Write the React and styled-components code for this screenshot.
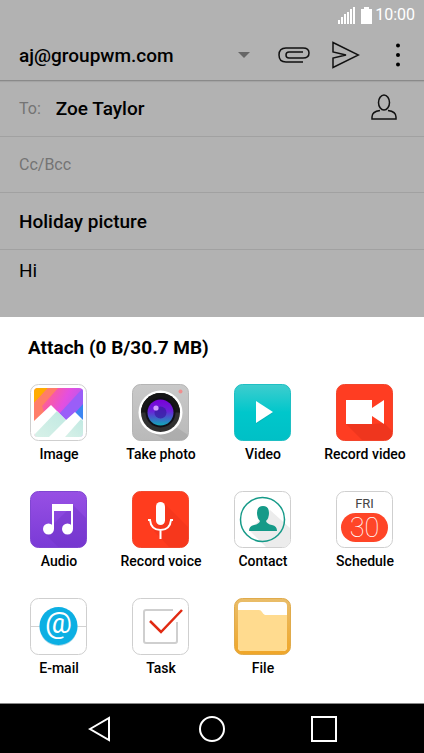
import React from 'react';
import styled, {createGlobalStyle} from "styled-components";

const GlobalStyle = createGlobalStyle`
    * {
        box-sizing: border-box;
    }
    body {
        margin: 0;
        font-family: Roboto, sans-serif;
        color: #000;
        background-color: #fff;
    }
    button, input, select, textarea {
        font-family: inherit;
        color: inherit;
        border: none;
        background-color: transparent;
        padding: 0;
        margin: 0;
        outline: none;
    }
    svg {
        display: block;
    }
`;

const Screen = styled.div`
    min-height: 100vh;
    display: flex;
    flex-direction: column;
`;

const Compose = styled.main`
    flex: 1;
    display: flex;
    flex-direction: column;
    background-color: #b2b2b2;
`;

const StatusBar = styled.div`
    height: 30px;
    padding: 0 9px;
    display: flex;
    align-items: center;
    justify-content: flex-end;
    gap: 3px;
    color: #fff;
    font-size: 16px;
    line-height: 20px;
`;

const Signal = styled.svg`
    margin-right: 3px;
`;

const Header = styled.header`
    height: 51px;
    padding-left: 19px;
    display: flex;
    align-items: center;
    border-bottom: 1px solid #8a8a8a;
    box-shadow: 0 1px 1px #a4a4a4;
`;

const Account = styled.div`
    position: relative;
    flex: 1;
    margin-right: 16px;
`;

const AccountSelect = styled.select`
    width: 100%;
    height: 32px;
    appearance: none;
    font-size: 19px;
    font-weight: 500;
`;

const AccountArrow = styled.svg`
    position: absolute;
    right: 2px;
    top: 13px;
    pointer-events: none;
`;

const IconButton = styled.button`
    width: 52px;
    height: 40px;
    display: flex;
    align-items: center;
    justify-content: center;
    cursor: pointer;
`;

const Row = styled.div`
    height: ${props => props.$tall ? "57px" : "56px"};
    padding: 0 14px 0 19px;
    display: flex;
    align-items: center;
    border-bottom: 1px solid #a1a1a1;
`;

const RowLabel = styled.label`
    margin-right: 15px;
    font-size: 16px;
    color: #747474;
`;

const Field = styled.input`
    flex: 1;
    min-width: 0;
    height: 32px;
    font-size: ${props => props.$small ? "16px" : "19px"};
    font-weight: ${props => props.$small ? 400 : 500};

    &::placeholder {
        color: #747474;
        opacity: 1;
    }
`;

const Body = styled.textarea`
    flex: 1;
    min-height: 40px;
    padding: 10px 19px;
    resize: none;
    font-size: 19px;
    line-height: 22px;
`;

const Sheet = styled.section`
    padding: 19px 8px 25px;
    background-color: #fff;
`;

const Title = styled.h2`
    margin: 0 20px 24px;
    font-size: 19px;
    line-height: 24px;
    font-weight: 700;
`;

const Grid = styled.div`
    display: grid;
    grid-template-columns: repeat(4, 1fr);
    row-gap: 27px;
`;

const Item = styled.button`
    display: flex;
    flex-direction: column;
    align-items: center;
    gap: 3px;
    font-size: 14px;
    line-height: 20px;
    font-weight: 500;
    white-space: nowrap;
    cursor: pointer;
`;

const NavBar = styled.nav`
    height: 50px;
    padding: 0 44px;
    display: grid;
    grid-template-columns: repeat(3, 1fr);
    background-color: #000;
    border-top: 1px solid #888;
`;

const NavButton = styled.button`
    display: flex;
    align-items: center;
    justify-content: center;
    cursor: pointer;
`;

const IconText = styled.text`
    font-family: Roboto, sans-serif;
    font-size: ${props => props.$size}px;
    font-weight: ${props => props.$weight || 400};
    text-anchor: middle;
`;

// rounded tile shared by every attach icon
const Tile = ({fill, stroke, children}) => (
    <svg width="58" height="57" viewBox="0 0 58 57" aria-hidden="true">
        <rect x="0.5" y="0.5" width="56" height="56" rx="8" fill={fill} stroke={stroke}/>
        {children}
    </svg>
);

const ImageIcon = () => (
    <Tile fill="#fff" stroke="#cfcfcf">
        <defs>
            <linearGradient id="sky" x1="0" y1="0" x2="1" y2="0.5">
                <stop offset="0" stopColor="#ff8a5c"/>
                <stop offset="0.35" stopColor="#f95aa5"/>
                <stop offset="0.6" stopColor="#e44fe0"/>
                <stop offset="1" stopColor="#a45cf5"/>
            </linearGradient>
            <linearGradient id="snow" x1="1" y1="0" x2="0" y2="1">
                <stop offset="0" stopColor="#c0e9e2"/>
                <stop offset="1" stopColor="#d8f1e8"/>
            </linearGradient>
            <clipPath id="photo"><rect x="4" y="4" width="49" height="49" rx="4"/></clipPath>
        </defs>
        <g clipPath="url(#photo)">
            <rect x="4" y="4" width="49" height="49" fill="url(#sky)"/>
            <path d="M4 4h14L4 19z" fill="#ffab00"/>
            <path d="M28 4h-10L4 19v19l10-10-2-6z" fill="#ff7d68"/>
            <path d="M53 4v20L40 37h-4l-7-7z" fill="#9a5ef8"/>
            <path d="M53 20v18l-8-9z" fill="#3c86f2"/>
            <path d="M4 37l17-16 15 15 9-8 8 8v17H4z" fill="#fff"/>
            <path d="M27 27l9 9-17 17H4v-2z" fill="url(#snow)"/>
            <path d="M51 35l3 3v15H35z" fill="url(#snow)"/>
        </g>
    </Tile>
);

const CameraIcon = () => (
    <Tile fill="url(#metal)" stroke="#b5b5b5">
        <defs>
            <linearGradient id="metal" x1="0" y1="0" x2="0" y2="1">
                <stop offset="0" stopColor="#c9c9c9"/>
                <stop offset="1" stopColor="#b9b9b9"/>
            </linearGradient>
            <linearGradient id="lens" x1="0" y1="0" x2="0" y2="1">
                <stop offset="0" stopColor="#7a00d8"/>
                <stop offset="0.45" stopColor="#6a22d8"/>
                <stop offset="1" stopColor="#10aab8"/>
            </linearGradient>
        </defs>
        <path d="M44 43l12 8q-1 5-7 5H33L17 47z" fill="#9f9f9f" opacity="0.5"/>
        <circle cx="28.5" cy="28.5" r="22" fill="#fff"/>
        <circle cx="28.5" cy="28.5" r="19.5" fill="#303030"/>
        <path d="M9 28.5a19.5 19.5 0 0 1 39 0z" fill="#161616"/>
        <circle cx="28.5" cy="28.5" r="15" fill="#101018"/>
        <circle cx="28.5" cy="28.5" r="13" fill="url(#lens)"/>
        <circle cx="28.5" cy="28.5" r="6" fill="#3b1ea6" opacity="0.8"/>
        <circle cx="24" cy="24" r="2.6" fill="#cf9cff"/>
        <circle cx="48.5" cy="7.5" r="2" fill="#f08e8e"/>
    </Tile>
);

const VideoIcon = () => (
    <Tile fill="url(#teal)" stroke="#1fbfc3">
        <defs>
            <linearGradient id="teal" x1="0" y1="0" x2="0" y2="1">
                <stop offset="0" stopColor="#3fcdce"/>
                <stop offset="0.5" stopColor="#00c7cb"/>
                <stop offset="1" stopColor="#00c0c6"/>
            </linearGradient>
        </defs>
        <path d="M22 18l17 11-17 11z" fill="#089ea4" opacity="0.5"/>
        <path d="M22 17l17 11-17 11z" fill="#fff"/>
    </Tile>
);

const RecordVideoIcon = () => (
    <Tile fill="#ff3d22" stroke="#f2452c">
        <path d="M10 40L38 40 48 39 56 47v2q0 7-7 7H26z" fill="#e0301a" opacity="0.5"/>
        <path d="M10 16h26v8l12-8v24l-12-8v8H10z" fill="#fff"/>
    </Tile>
);

const AudioIcon = () => (
    <Tile fill="url(#violet)" stroke="#8046d2">
        <defs>
            <linearGradient id="violet" x1="0" y1="0" x2="0" y2="1">
                <stop offset="0" stopColor="#9750e4"/>
                <stop offset="1" stopColor="#7a3ad6"/>
            </linearGradient>
        </defs>
        <path d="M43 14l13 13v22q0 7-7 7H28L14 42z" fill="#6a2fc0" opacity="0.3"/>
        <path d="M22 13h21v25h-2V20H24v18h-2z" fill="#fff"/>
        <circle cx="18.5" cy="38" r="5.5" fill="#fff"/>
        <circle cx="37.5" cy="38" r="5.5" fill="#fff"/>
    </Tile>
);

const RecordVoiceIcon = () => (
    <Tile fill="#ff3c1e" stroke="#f2482e">
        <path d="M33 13l23 23v13q0 7-7 7H37L22 40z" fill="#e8301a" opacity="0.4"/>
        <rect x="24" y="11" width="9" height="23" rx="4.5" fill="#fff"/>
        <path d="M16 29h2q1 10 10.500 10T39 29h2M28.500 39v9" fill="none" stroke="#fff" strokeWidth="2"/>
    </Tile>
);

const ContactIcon = () => (
    <Tile fill="#fff" stroke="#cfcfcf">
        <path d="M36 19l20 18v12q0 7-7 7H32L15 39z" fill="#ececec"/>
        <circle cx="28.5" cy="28.5" r="22" fill="none" stroke="#159a88" strokeWidth="1.5"/>
        <path d="M15 40q0-5 5-6 5-1 6-4-3-3-3-8 0-7 6-7t6 7q0 5-3 8 1 3 6 4 5 1 5 6z" fill="#159a88"/>
    </Tile>
);

const ScheduleIcon = () => (
    <Tile fill="#fff" stroke="#cfcfcf">
        <IconText x="28.5" y="17" $size={13} fill="#444">FRI</IconText>
        <rect x="5" y="22" width="47" height="29" rx="14.5" fill="#ff4527"/>
        <IconText x="28.5" y="46" $size={27} $weight={100} fill="#fff">30</IconText>
    </Tile>
);

const EmailIcon = () => (
    <Tile fill="#fff" stroke="#cfcfcf">
        <path d="M1 28.5h55" stroke="#d2d2d2"/>
        <circle cx="28.5" cy="29" r="19" fill="#a9d9ea"/>
        <circle cx="28.5" cy="28" r="19" fill="#0cafe3"/>
        <IconText x="28.5" y="35" $size={30} fill="#fff">@</IconText>
    </Tile>
);

const TaskIcon = () => (
    <Tile fill="#fff" stroke="#cfcfcf">
        <path d="M41 12H14q-2 0-2 2v29q0 2 2 2h29q2 0 2-2V24" fill="none" stroke="#cfcfcf" strokeWidth="2"/>
        <path d="M18 23l11 11 21-22" fill="none" stroke="#e12a12" strokeWidth="2.5"/>
    </Tile>
);

const FileIcon = () => (
    <Tile fill="url(#amber)" stroke="#e0ab4c">
        <defs>
            <linearGradient id="amber" x1="0" y1="0" x2="0" y2="1">
                <stop offset="0" stopColor="#e9bd6a"/>
                <stop offset="1" stopColor="#f0a628"/>
            </linearGradient>
        </defs>
        <rect x="4" y="4" width="49" height="49" rx="4" fill="#fff"/>
        <path d="M4 12h21q2 0 3 2t3 3h22v32q0 4-4 4H8q-4 0-4-4z" fill="#ffdb8f"/>
    </Tile>
);

const attachments = [
    {label: "Image", Icon: ImageIcon},
    {label: "Take photo", Icon: CameraIcon},
    {label: "Video", Icon: VideoIcon},
    {label: "Record video", Icon: RecordVideoIcon},
    {label: "Audio", Icon: AudioIcon},
    {label: "Record voice", Icon: RecordVoiceIcon},
    {label: "Contact", Icon: ContactIcon},
    {label: "Schedule", Icon: ScheduleIcon},
    {label: "E-mail", Icon: EmailIcon},
    {label: "Task", Icon: TaskIcon},
    {label: "File", Icon: FileIcon},
];

const App = () => {
    return (
        <Screen>
            <GlobalStyle/>
            <Compose>
                <StatusBar>
                    <Signal width="17" height="17" viewBox="0 0 17 17" fill="#fff">
                        <path d="M0 13h2v4H0zM3 10h2v7H3zM6 7h2v10H6zM9 5h2v12H9zM12 2h2v15h-2zM15 0h2v17h-2z"/>
                    </Signal>
                    <svg width="11" height="17" viewBox="0 0 11 17" fill="#fff">
                        <path d="M3 0h5v2h3v15H0V2h3z"/>
                    </svg>
                    <span>10:00</span>
                </StatusBar>
                <Header>
                    <Account>
                        <AccountSelect aria-label="Account">
                            <option>aj@groupwm.com</option>
                        </AccountSelect>
                        <AccountArrow width="12" height="6" viewBox="0 0 12 6">
                            <path d="M0 0h12L6 6z" fill="#666"/>
                        </AccountArrow>
                    </Account>
                    <IconButton aria-label="Attach">
                        <svg width="32" height="16" viewBox="0 0 32 16" fill="none" stroke="#111" strokeWidth="1.5">
                            <path d="M25 15H8Q1 15 1 8t7-7h17q6 0 6 5t-6 5H11q-3 0-3-3t3-3h14"/>
                        </svg>
                    </IconButton>
                    <IconButton aria-label="Send">
                        <svg width="28" height="28" viewBox="0 0 28 28" fill="none" stroke="#111" strokeWidth="1.5">
                            <path d="M1 1.5L26.5 14 1 26.5V17l13-3L1 11z"/>
                        </svg>
                    </IconButton>
                    <IconButton aria-label="More">
                        <svg width="4" height="24" viewBox="0 0 4 24" fill="#000">
                            <circle cx="2" cy="2.5" r="2"/>
                            <circle cx="2" cy="12" r="2"/>
                            <circle cx="2" cy="21.5" r="2"/>
                        </svg>
                    </IconButton>
                </Header>
                <Row>
                    <RowLabel htmlFor="to">To:</RowLabel>
                    <Field id="to" defaultValue="Zoe Taylor"/>
                    <IconButton aria-label="Contacts">
                        <svg width="26" height="30" viewBox="0 0 26 30" fill="none" stroke="#111" strokeWidth="1.5">
                            <ellipse cx="13" cy="8.5" rx="5.5" ry="7.5"/>
                            <path d="M9 16.5Q1 17.5 1 23v2h24v-2q0-5.500-8-6.500"/>
                        </svg>
                    </IconButton>
                </Row>
                <Row>
                    <Field $small aria-label="Cc/Bcc" placeholder="Cc/Bcc"/>
                </Row>
                <Row $tall>
                    <Field aria-label="Subject" defaultValue="Holiday picture"/>
                </Row>
                <Body aria-label="Message" defaultValue="Hi"/>
            </Compose>
            <Sheet>
                <Title>Attach (0 B/30.7 MB)</Title>
                <Grid>
                    {attachments.map(({label, Icon}) => (
                        <Item key={label}>
                            <Icon/>
                            <span>{label}</span>
                        </Item>
                    ))}
                </Grid>
            </Sheet>
            <NavBar>
                <NavButton aria-label="Back">
                    <svg width="24" height="26" viewBox="0 0 24 26" fill="none" stroke="#fff" strokeWidth="2">
                        <path d="M2 13L21 2v22z"/>
                    </svg>
                </NavButton>
                <NavButton aria-label="Home">
                    <svg width="26" height="26" viewBox="0 0 26 26" fill="none" stroke="#fff" strokeWidth="2">
                        <circle cx="13" cy="13" r="12"/>
                    </svg>
                </NavButton>
                <NavButton aria-label="Recent apps">
                    <svg width="26" height="26" viewBox="0 0 26 26" fill="none" stroke="#fff" strokeWidth="2">
                        <rect x="1" y="1" width="24" height="24"/>
                    </svg>
                </NavButton>
            </NavBar>
        </Screen>
    );
};

export default App;
